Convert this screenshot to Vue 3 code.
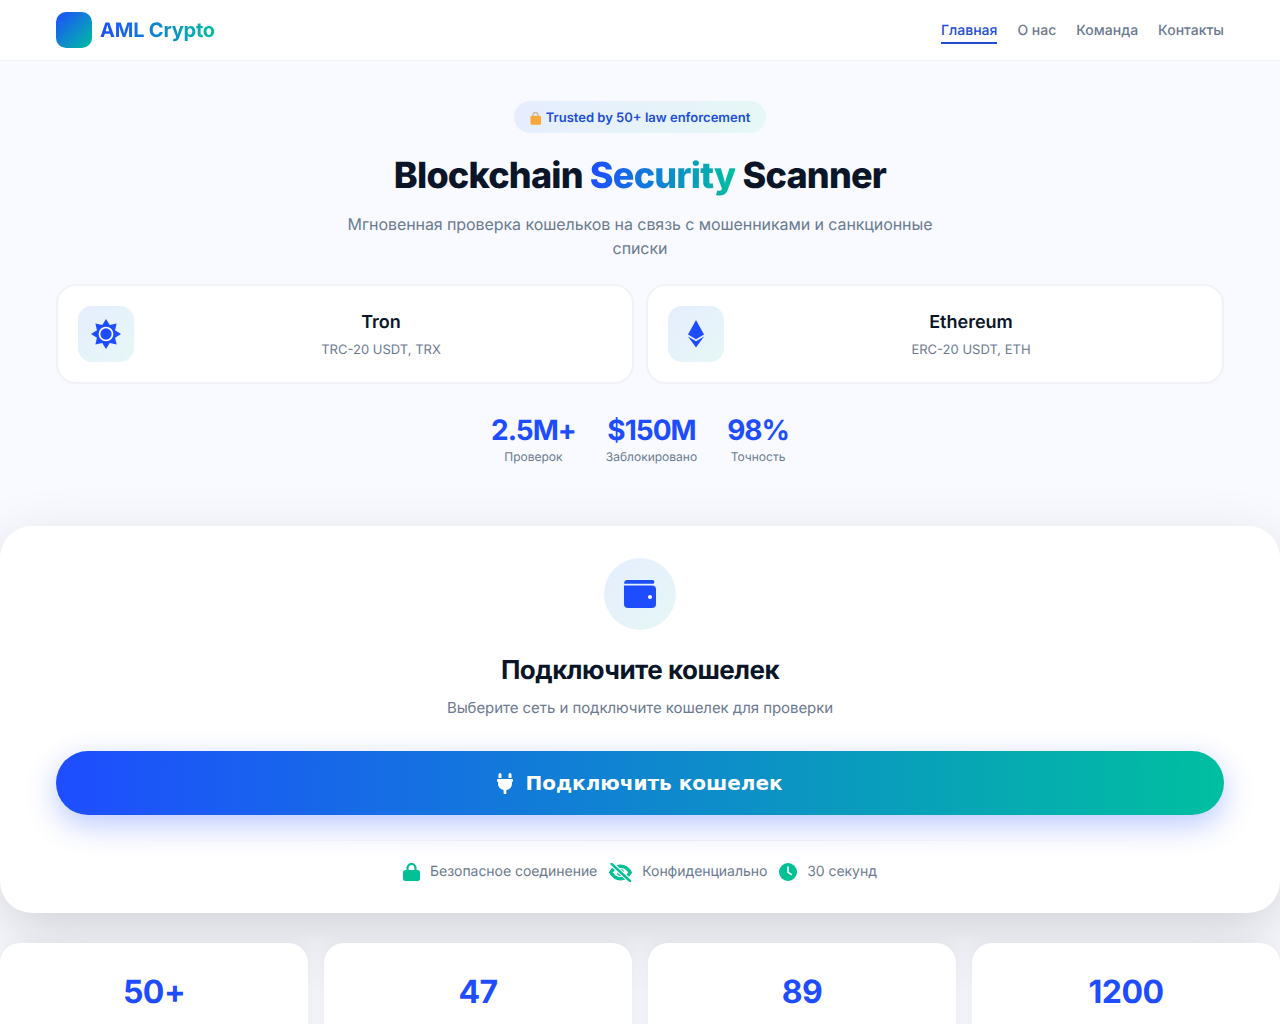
<template>
  <div class="page">
    <header class="topbar">
      <div class="brand">
        <div class="brand-mark"></div>
        <span class="brand-name">AML Crypto</span>
      </div>
      <nav class="nav">
        <a v-for="link in links" :key="link" class="nav-link" :class="{ active: link === 'Главная' }">{{ link }}</a>
      </nav>
    </header>

    <section class="hero">
      <div class="badge">
        <svg width="11" height="13" viewBox="0 0 11 13">
          <path d="M3 5V3a2.500 2.500 0 0 1 5 0v2" fill="none" stroke="#c4b6a2" stroke-width="1.300" />
          <rect x="0.500" y="3.800" width="10.500" height="9" rx="1.400" fill="#f9a63a" />
        </svg>
        <span>Trusted by 50+ law enforcement</span>
      </div>
      <h1 class="hero-title">Blockchain <span class="grad-text">Security</span> Scanner</h1>
      <p class="hero-sub">Мгновенная проверка кошельков на связь с мошенниками и санкционные списки</p>

      <div class="networks">
        <div class="network">
          <div class="network-icon">
            <svg class="sun" width="28" height="28" viewBox="0 0 28 28">
              <polygon :points="sunPoints" fill="#1e4dff" />
              <circle cx="14" cy="14" r="6.500" fill="#1e4dff" stroke="#fff" stroke-width="1.700" />
            </svg>
          </div>
          <div class="network-text">
            <div class="network-name">Tron</div>
            <div class="network-desc">TRC-20 USDT, TRX</div>
          </div>
        </div>
        <div class="network">
          <div class="network-icon">
            <svg width="16" height="28" viewBox="0 0 16 28">
              <path d="M8 0L16 14.500 8 19.200 0 14.500Z" fill="#1e4dff" />
              <path d="M0 16.600L8 21.300 16 16.600 8 27.500Z" fill="#1e4dff" />
            </svg>
          </div>
          <div class="network-text">
            <div class="network-name">Ethereum</div>
            <div class="network-desc">ERC-20 USDT, ETH</div>
          </div>
        </div>
      </div>

      <div class="hero-stats">
        <div v-for="s in heroStats" :key="s.label" class="hero-stat">
          <div class="hero-stat-value">{{ s.value }}</div>
          <div class="hero-stat-label">{{ s.label }}</div>
        </div>
      </div>
    </section>

    <section class="connect">
      <div class="connect-icon">
        <svg width="32" height="28" viewBox="0 0 32 28">
          <path d="M3 0H28.500a1.900 1.900 0 0 1 0 3.800H0.300A3 3 0 0 1 3 0Z" fill="#1e4dff" />
          <path d="M0 5.500H28a4 4 0 0 1 4 4V24a4 4 0 0 1-4 4H4a4 4 0 0 1-4-4Z" fill="#1e4dff" />
          <circle cx="26" cy="17" r="2" fill="#fff" />
        </svg>
      </div>
      <h2 class="connect-title">Подключите кошелек</h2>
      <p class="connect-sub">Выберите сеть и подключите кошелек для проверки</p>
      <button class="connect-btn">
        <svg width="16" height="21" viewBox="0 0 16 21">
          <path d="M3 0a1.500 1.500 0 0 1 1.500 1.500V5h-3V1.500A1.500 1.500 0 0 1 3 0ZM13 0a1.500 1.500 0 0 1 1.500 1.500V5h-3V1.500A1.500 1.500 0 0 1 13 0Z" fill="#fff" />
          <path d="M1 6H15a1 1 0 0 1 1 1v1a1 1 0 0 1-1 1v2a6 6 0 0 1-5.600 5.900V20a1.400 1.400 0 0 1-2.800 0v-3.100A6 6 0 0 1 1 11V9A1 1 0 0 1 0 8V7a1 1 0 0 1 1-1Z" fill="#fff" />
        </svg>
        <span>Подключить кошелек</span>
      </button>
      <div class="divider"></div>
      <div class="trust">
        <div class="trust-item">
          <svg width="17" height="18" viewBox="0 0 17 18">
            <path d="M4.500 8V5a4 4 0 0 1 8 0v3" fill="none" stroke="#00c096" stroke-width="2.200" />
            <rect x="0" y="7" width="17" height="11" rx="2.500" fill="#00c096" />
          </svg>
          <span>Безопасное соединение</span>
        </div>
        <div class="trust-item">
          <svg width="23" height="19" viewBox="0 0 23 19">
            <path d="M1.800 9.500C4.200 5.400 7.500 3.200 11.500 3.200s7.300 2.200 9.700 6.300c-2.400 4.100-5.700 6.300-9.700 6.300s-7.300-2.200-9.700-6.300Z" fill="none" stroke="#00c096" stroke-width="3.400" />
            <circle cx="11.500" cy="9.500" r="3.400" fill="#00c096" />
            <path d="M2.500 0.800L21 18" stroke="#fff" stroke-width="4.800" />
            <path d="M2.500 0.800L21 18" stroke="#00c096" stroke-width="2.400" stroke-linecap="round" />
          </svg>
          <span>Конфиденциально</span>
        </div>
        <div class="trust-item">
          <svg width="18" height="18" viewBox="0 0 18 18">
            <circle cx="9" cy="9" r="9" fill="#00c096" />
            <path d="M9 4.200V9.300L12.200 11.400" fill="none" stroke="#fff" stroke-width="1.700" stroke-linecap="round" stroke-linejoin="round" />
          </svg>
          <span>30 секунд</span>
        </div>
      </div>
    </section>

    <section class="counters">
      <div v-for="n in counters" :key="n" class="counter">{{ n }}</div>
    </section>
  </div>
</template>

<script setup>
const links = ['Главная', 'О нас', 'Команда', 'Контакты']

const heroStats = [
  { value: '2.5M+', label: 'Проверок' },
  { value: '$150M', label: 'Заблокировано' },
  { value: '98%', label: 'Точность' }
]

const counters = ['50+', '47', '89', '1200']

// 8-pointed star behind the Tron ring
const sunPoints = Array.from({ length: 16 }, (_, i) => {
  const r = i % 2 === 0 ? 15 : 9.8
  const a = (i * Math.PI) / 8
  return `${(14 + r * Math.sin(a)).toFixed(2)},${(14 - r * Math.cos(a)).toFixed(2)}`
}).join(' ')
</script>

<style>
html,
body {
  margin: 0;
  background: #f8faff;
  overflow-x: hidden;
}
html::-webkit-scrollbar {
  display: none;
}
</style>

<style scoped>
.page {
  font-family: Inter, 'Noto Sans', sans-serif;
  text-rendering: geometricPrecision;
  color: #0a1628;
  background: #f8faff;
  overflow: hidden;
}

.topbar {
  display: flex;
  align-items: center;
  justify-content: space-between;
  height: 60px;
  padding: 0 56px;
  background: #fff;
  border-bottom: 1px solid #f0f2f6;
}

.brand {
  display: flex;
  align-items: center;
  gap: 8px;
}

.brand-mark {
  width: 36px;
  height: 36px;
  border-radius: 10px;
  background: linear-gradient(135deg, #1e4dff, #00bfa0);
}

.brand-name {
  font-size: 20px;
  font-weight: 700;
  letter-spacing: -0.2px;
  background: linear-gradient(90deg, #1e4dff, #00bfa0);
  -webkit-background-clip: text;
  background-clip: text;
  color: transparent;
}

.nav {
  display: flex;
  gap: 20px;
}

.nav-link {
  font-size: 14px;
  font-weight: 500;
  color: #6b7a90;
  padding: 5px 0 3px;
  border-bottom: 2px solid transparent;
}

.nav-link.active {
  color: #1e4dd8;
  border-bottom-color: #1e4dd8;
}

.hero {
  padding: 40px 56px 0;
  text-align: center;
}

.badge {
  display: inline-flex;
  align-items: center;
  gap: 5px;
  padding: 9px 16px 7px;
  border-radius: 16px;
  font-size: 13px;
  line-height: 16px;
  font-weight: 600;
  color: #1e4dd8;
  background: linear-gradient(135deg, #e6edfe, #e6f8f6);
}

.hero-title {
  margin: 20px 0 15px;
  font-size: 36px;
  line-height: 44px;
  font-weight: 800;
  letter-spacing: -0.8px;
}

.grad-text {
  background: linear-gradient(90deg, #1e4dff, #00bfa0);
  -webkit-background-clip: text;
  background-clip: text;
  color: transparent;
}

.hero-sub {
  max-width: 600px;
  margin: 0 auto 24px;
  font-size: 16px;
  line-height: 24px;
  letter-spacing: -0.08px;
  color: #6b7a90;
}

.networks {
  display: grid;
  grid-template-columns: 1fr 1fr;
  gap: 12px;
}

.network {
  display: flex;
  align-items: center;
  gap: 16px;
  padding: 20px;
  background: #fff;
  border: 2px solid #f0f2f8;
  border-radius: 20px;
}

.network-icon {
  display: flex;
  align-items: center;
  justify-content: center;
  width: 56px;
  height: 56px;
  border-radius: 14px;
  background: linear-gradient(135deg, #e6edfe, #e6f8f6);
}

.sun {
  overflow: visible;
}

.network-text {
  flex: 1;
  padding-top: 2px;
}

.network-name {
  font-size: 18px;
  font-weight: 600;
  line-height: 24px;
  margin-bottom: 5px;
}

.network-desc {
  font-size: 13px;
  line-height: 20px;
  color: #6b7a90;
}

.hero-stats {
  display: flex;
  justify-content: center;
  gap: 30px;
  margin-top: 28px;
}

.hero-stat-value {
  font-size: 28px;
  line-height: 36px;
  font-weight: 700;
  letter-spacing: -1px;
  color: #1e4dff;
}

.hero-stat-label {
  font-size: 12px;
  line-height: 18px;
  color: #6b7a90;
}

.connect {
  margin-top: 60px;
  padding: 32px 56px 31px;
  background: #fff;
  border-radius: 32px;
  text-align: center;
  box-shadow: 0 20px 60px rgba(0, 0, 0, 0.16);
}

.connect-icon {
  display: flex;
  align-items: center;
  justify-content: center;
  width: 72px;
  height: 72px;
  margin: 0 auto 25px;
  border-radius: 50%;
  background: linear-gradient(135deg, #e6edfe, #e6f8f6);
}

.connect-title {
  margin: 0 0 9px;
  font-size: 26px;
  line-height: 32px;
  font-weight: 700;
  letter-spacing: -0.5px;
}

.connect-sub {
  margin: 0 0 31px;
  font-size: 15px;
  line-height: 24px;
  letter-spacing: -0.06px;
  color: #6b7a90;
}

.connect-btn {
  display: flex;
  align-items: center;
  justify-content: center;
  gap: 12px;
  width: 100%;
  height: 64px;
  border: 0;
  border-radius: 32px;
  font-family: 'DejaVu Sans', sans-serif;
  font-size: 20px;
  font-weight: 700;
  color: #fff;
  background: linear-gradient(90deg, #1e4dff, #00bfa0);
  box-shadow: 0 10px 30px rgba(30, 77, 255, 0.3);
}

.divider {
  height: 1px;
  margin: 25px 0 21px;
  background: linear-gradient(90deg, transparent, #e8ebf0, transparent);
}

.trust {
  display: flex;
  justify-content: center;
  gap: 12px;
}

.trust-item {
  display: flex;
  align-items: center;
  gap: 10px;
  font-size: 14px;
  line-height: 20px;
  letter-spacing: -0.05px;
  color: #6b7a90;
}

.counters {
  display: grid;
  grid-template-columns: repeat(4, 1fr);
  gap: 16px;
  margin-top: 30px;
}

.counter {
  padding: 25px 0 48px;
  background: #fff;
  border-radius: 20px;
  text-align: center;
  font-size: 32px;
  line-height: 48px;
  font-weight: 700;
  letter-spacing: -0.5px;
  color: #1e4dff;
  box-shadow: 0 4px 20px rgba(0, 0, 0, 0.08);
}
</style>
